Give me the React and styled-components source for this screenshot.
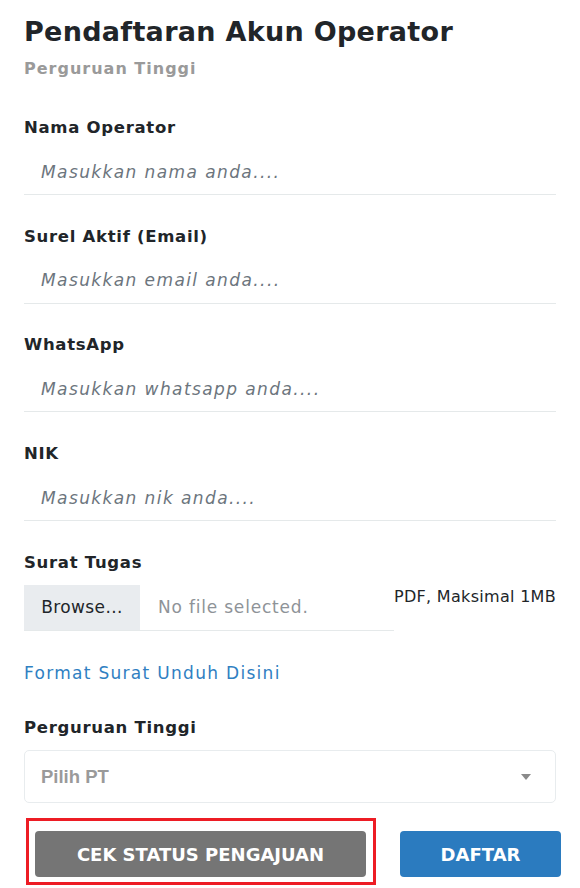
import React from "react";
import styled, { createGlobalStyle } from "styled-components";

const Global = createGlobalStyle`
  html, body { margin: 0; padding: 0; background: #fff; }
  body { font-family: "DejaVu Sans", "Noto Sans", sans-serif; color: #212529; }
  * { box-sizing: border-box; }
`;

const Page = styled.div`
  width: 580px;
  padding: 14px 24px 0 24px;
`;

const Title = styled.h1`
  margin: 0;
  font-size: 27px;
  line-height: 36px;
  font-weight: 700;
  letter-spacing: 0.3px;
  color: #212529;
`;

const Subtitle = styled.div`
  margin-top: 9px;
  font-size: 16px;
  line-height: 20px;
  font-weight: 700;
  letter-spacing: 1px;
  color: #9a9a9a;
`;

const Fields = styled.div`
  margin-top: 39px;
  display: flex;
  flex-direction: column;
`;

const Field = styled.div`
  display: flex;
  flex-direction: column;
  margin-bottom: ${(p) => p.$gap ?? 31.7}px;
`;

const Label = styled.label`
  font-size: 16.5px;
  line-height: 20px;
  font-weight: 700;
  letter-spacing: 0.7px;
  color: #212529;
`;

const TextInput = styled.input`
  margin-top: 11px;
  height: 46px;
  width: 100%;
  border: none;
  border-bottom: 1px solid #e5e9ea;
  padding: 0 17px;
  font-family: inherit;
  font-size: 17px;
  font-style: italic;
  letter-spacing: 1.4px;
  color: #495057;
  outline: none;
  background: transparent;
  &::placeholder { color: #6c757d; opacity: 1; }
`;

const FileRow = styled.div`
  margin-top: 12px;
  display: flex;
  align-items: flex-start;
`;

const FileBox = styled.div`
  width: 370px;
  height: 46px;
  display: flex;
  align-items: stretch;
  border-bottom: 1px solid #e5e9ea;
`;

const BrowseBtn = styled.div`
  width: 116px;
  background: #e9ecef;
  display: flex;
  align-items: center;
  justify-content: center;
  font-size: 17px;
  letter-spacing: 0.4px;
  color: #212529;
`;

const FileName = styled.div`
  padding-left: 18px;
  display: flex;
  align-items: center;
  font-size: 17px;
  letter-spacing: 0.8px;
  color: #8e9398;
`;

const FileHint = styled.div`
  margin-top: 2px;
  flex: 1;
  text-align: right;
  font-size: 16px;
  line-height: 20px;
  letter-spacing: 0.3px;
  color: #212529;
  white-space: nowrap;
`;

const Link = styled.a`
  display: block;
  font-size: 17px;
  line-height: 20px;
  letter-spacing: 1.3px;
  color: #3080c2;
  text-decoration: none;
  margin-bottom: 35px;
`;

const SelectBox = styled.div`
  margin-top: 12px;
  height: 53px;
  border: 1px solid #e8ecee;
  border-radius: 5px;
  display: flex;
  align-items: center;
  justify-content: space-between;
  padding: 0 24px 0 16px;
`;

const SelectText = styled.span`
  font-family: "Liberation Sans", Arial, sans-serif;
  font-size: 18.5px;
  font-weight: 700;
  color: #9a9a9a;
`;

const Caret = styled.span`
  width: 0;
  height: 0;
  border-left: 5px solid transparent;
  border-right: 5px solid transparent;
  border-top: 6px solid #8a8a8a;
`;

const ButtonRow = styled.div`
  margin-top: 15px;
  margin-left: 2px;
  margin-right: -5px;
  display: flex;
  justify-content: space-between;
  align-items: flex-start;
`;

const Highlight = styled.div`
  border: 3px solid #ed1c24;
  padding: 10px 7px 5px 6px;
`;

const Button = styled.button`
  height: 46px;
  width: ${(p) => p.$w}px;
  margin-top: ${(p) => p.$mt || 0}px;
  padding: 0;
  border: none;
  border-radius: 4px;
  background: ${(p) => p.$bg};
  color: #fff;
  font-family: inherit;
  font-size: 18px;
  font-weight: 700;
  cursor: pointer;
`;

export default function App() {
  const fields = [
    ["Nama Operator", "Masukkan nama anda...."],
    ["Surel Aktif (Email)", "Masukkan email anda...."],
    ["WhatsApp", "Masukkan whatsapp anda...."],
    ["NIK", "Masukkan nik anda...."],
  ];
  return (
    <>
      <Global />
      <Page>
        <Title>Pendaftaran Akun Operator</Title>
        <Subtitle>Perguruan Tinggi</Subtitle>
        <Fields>
          {fields.map(([l, p]) => (
            <Field key={l}>
              <Label>{l}</Label>
              <TextInput placeholder={p} />
            </Field>
          ))}
          <Field $gap={32.5}>
            <Label>Surat Tugas</Label>
            <FileRow>
              <FileBox>
                <BrowseBtn>Browse...</BrowseBtn>
                <FileName>No file selected.</FileName>
              </FileBox>
              <FileHint>PDF, Maksimal 1MB</FileHint>
            </FileRow>
          </Field>
          <Link href="#">Format Surat Unduh Disini</Link>
          <Field $gap={0}>
            <Label>Perguruan Tinggi</Label>
            <SelectBox>
              <SelectText>Pilih PT</SelectText>
              <Caret />
            </SelectBox>
          </Field>
        </Fields>
        <ButtonRow>
          <Highlight>
            <Button $w={331} $bg="#757575">CEK STATUS PENGAJUAN</Button>
          </Highlight>
          <Button $w={161} $mt={13} $bg="#2b7bbf">DAFTAR</Button>
        </ButtonRow>
      </Page>
    </>
  );
}
